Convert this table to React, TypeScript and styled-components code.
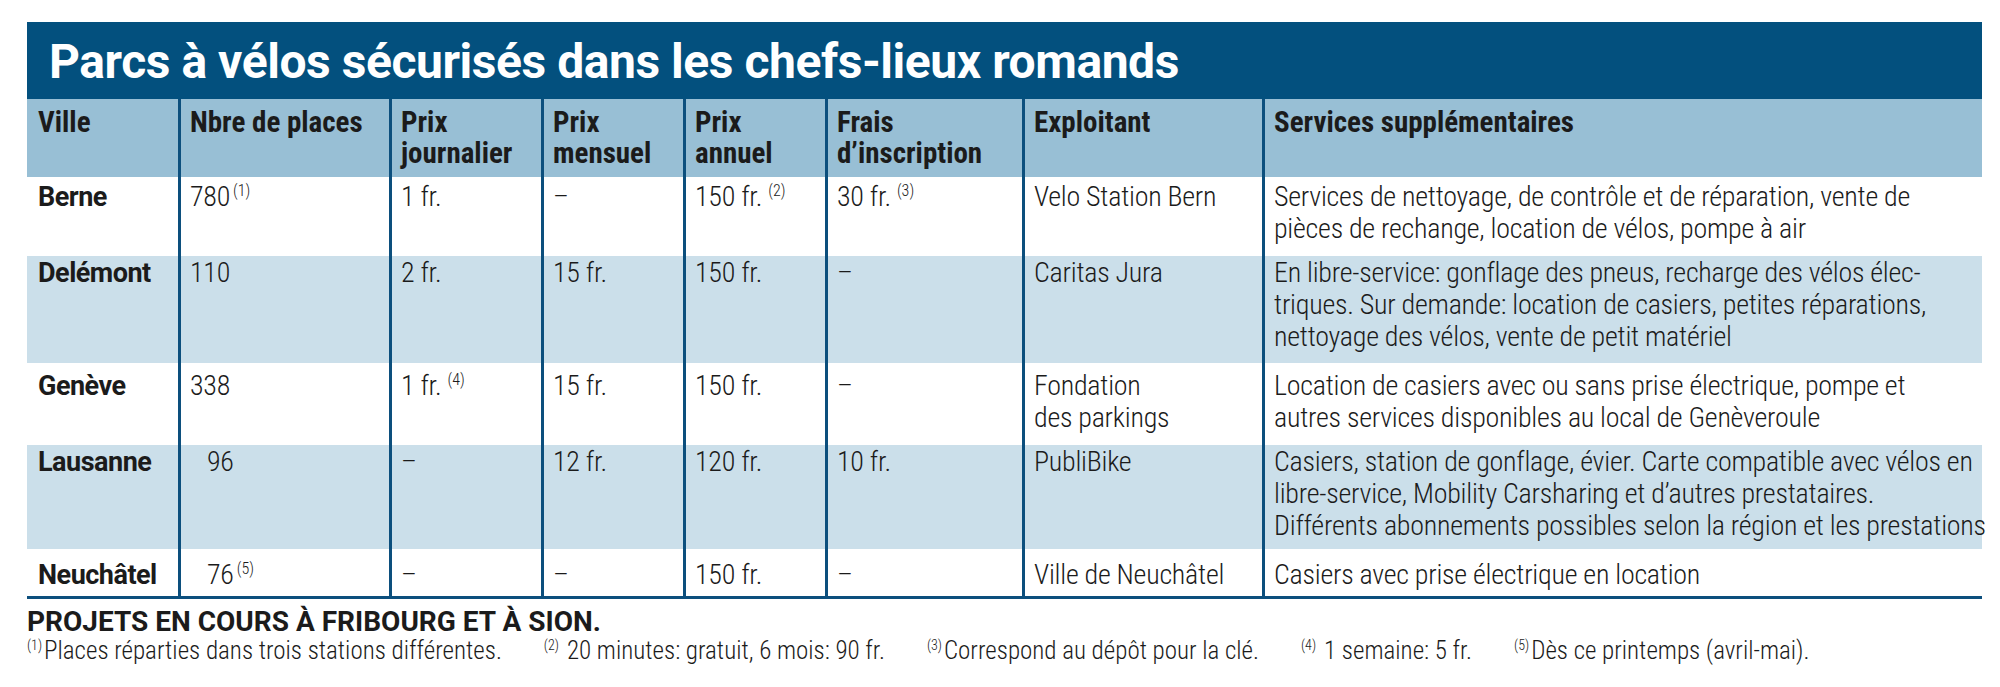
import React from 'react'
import styled, { createGlobalStyle } from 'styled-components'

const GlobalStyle = createGlobalStyle`
  body {
    margin: 0;
    background: #ffffff;
    font-family: Roboto, "Roboto Condensed", "Liberation Sans", sans-serif;
    color: #1b1b1b;
  }
`

const COLS = '151px 211px 152px 142px 142px 197px 240px 720px'

const Page = styled.div`
  padding: 22px 18px 0 27px;
  width: 1955px;
`

const TitleBar = styled.div`
  height: 77px;
  box-sizing: border-box;
  background: #03507e;
  padding: 15px 0 0 22px;
`

const Title = styled.h1`
  margin: 0;
  color: #ffffff;
  font-size: 48px;
  line-height: 49px;
  font-weight: 700;
  font-stretch: 90%;
  letter-spacing: -0.45px;
  white-space: nowrap;
`

const Table = styled.div`
  border-bottom: 3px solid #0c4f7d;
`

const Row = styled.div<{ $bg: string; $h: number; $pt: number }>`
  display: grid;
  grid-template-columns: ${COLS};
  height: ${(p) => p.$h}px;
  background: ${(p) => p.$bg};

  & > div {
    padding-top: ${(p) => p.$pt}px;
  }
`

const Cell = styled.div<{ $first?: boolean }>`
  box-sizing: border-box;
  padding-left: ${(p) => (p.$first ? 11 : 9)}px;
  border-left: ${(p) => (p.$first ? 'none' : '3px solid #0c4f7d')};
  white-space: nowrap;
`

const HeadCell = styled(Cell)`
  font-size: 29px;
  line-height: 31px;
  font-weight: 700;
  font-stretch: 75%;
`

const BodyCell = styled(Cell)`
  font-size: 28px;
  line-height: 32px;
  font-weight: 300;
  font-stretch: 75%;
  letter-spacing: -0.25px;
`

const CityCell = styled(BodyCell)`
  font-size: 27px;
  font-weight: 700;
  font-stretch: 90%;
  letter-spacing: -0.5px;
`

const Indent = styled.span`
  padding-left: 17px;
`

const Sup = styled.sup<{ $gap?: number }>`
  font-size: 16px;
  line-height: 0;
  vertical-align: 10px;
  margin-left: ${(p) => p.$gap ?? 3}px;
  font-weight: 300;
  letter-spacing: 0;
`

const Footer = styled.div`
  padding-top: 7px;
`

const Projects = styled.div`
  font-size: 28px;
  line-height: 31px;
  font-weight: 700;
  font-stretch: 100%;
  white-space: nowrap;
`

const Notes = styled.div`
  display: flex;
  gap: 42px;
  font-size: 25px;
  line-height: 28px;
  font-weight: 300;
  font-stretch: 75%;
  white-space: nowrap;
`

const Note = styled.span``

const NoteSup = styled.sup<{ $gap?: number }>`
  font-size: 14px;
  line-height: 0;
  vertical-align: 9px;
  margin-right: ${(p) => p.$gap ?? 2}px;
`

type RowData = {
  city: string
  places: React.ReactNode
  day: React.ReactNode
  month: string
  year: React.ReactNode
  fee: React.ReactNode
  operator: React.ReactNode
  services: React.ReactNode
  h: number
  pt: number
}

const rows: RowData[] = [
  {
    city: 'Berne',
    places: <>780<Sup>(1)</Sup></>,
    day: '1 fr.',
    month: '–',
    year: <>150 fr.<Sup $gap={6}>(2)</Sup></>,
    fee: <>30 fr.<Sup $gap={6}>(3)</Sup></>,
    operator: 'Velo Station Bern',
    services: <>Services de nettoyage, de contrôle et de réparation, vente de<br />pièces de rechange, location de vélos, pompe à air</>,
    h: 79,
    pt: 4,
  },
  {
    city: 'Delémont',
    places: '110',
    day: '2 fr.',
    month: '15 fr.',
    year: '150 fr.',
    fee: '–',
    operator: 'Caritas Jura',
    services: <>En libre-service: gonflage des pneus, recharge des vélos élec-<br />triques. Sur demande: location de casiers, petites réparations,<br />nettoyage des vélos, vente de petit matériel</>,
    h: 107,
    pt: 1,
  },
  {
    city: 'Genève',
    places: '338',
    day: <>1 fr.<Sup $gap={6}>(4)</Sup></>,
    month: '15 fr.',
    year: '150 fr.',
    fee: '–',
    operator: <>Fondation<br />des parkings</>,
    services: <>Location de casiers avec ou sans prise électrique, pompe et<br />autres services disponibles au local de Genèveroule</>,
    h: 82,
    pt: 7,
  },
  {
    city: 'Lausanne',
    places: <Indent>96</Indent>,
    day: '–',
    month: '12 fr.',
    year: '120 fr.',
    fee: '10 fr.',
    operator: 'PubliBike',
    services: <>Casiers, station de gonflage, évier. Carte compatible avec vélos en<br />libre-service, Mobility Carsharing et d’autres prestataires.<br />Différents abonnements possibles selon la région et les prestations</>,
    h: 104,
    pt: 1,
  },
  {
    city: 'Neuchâtel',
    places: <Indent>76<Sup>(5)</Sup></Indent>,
    day: '–',
    month: '–',
    year: '150 fr.',
    fee: '–',
    operator: 'Ville de Neuchâtel',
    services: 'Casiers avec prise électrique en location',
    h: 47,
    pt: 10,
  },
]

const headers: React.ReactNode[] = [
  'Ville',
  'Nbre de places',
  <>Prix<br />journalier</>,
  <>Prix<br />mensuel</>,
  <>Prix<br />annuel</>,
  <>Frais<br />d’inscription</>,
  'Exploitant',
  'Services supplémentaires',
]

export default function App() {
  return (
    <Page>
      <GlobalStyle />
      <TitleBar>
        <Title>Parcs à vélos sécurisés dans les chefs-lieux romands</Title>
      </TitleBar>
      <Table>
        <Row $bg="#98bfd5" $h={78} $pt={8}>
          {headers.map((h, i) => (
            <HeadCell key={i} $first={i === 0}>{h}</HeadCell>
          ))}
        </Row>
        {rows.map((r, i) => (
          <Row key={r.city} $bg={i % 2 === 0 ? '#ffffff' : '#cbdfea'} $h={r.h} $pt={r.pt}>
            <CityCell $first>{r.city}</CityCell>
            <BodyCell>{r.places}</BodyCell>
            <BodyCell>{r.day}</BodyCell>
            <BodyCell>{r.month}</BodyCell>
            <BodyCell>{r.year}</BodyCell>
            <BodyCell>{r.fee}</BodyCell>
            <BodyCell>{r.operator}</BodyCell>
            <BodyCell>{r.services}</BodyCell>
          </Row>
        ))}
      </Table>
      <Footer>
        <Projects>PROJETS EN COURS À FRIBOURG ET À SION.</Projects>
        <Notes>
          <Note><NoteSup>(1)</NoteSup>Places réparties dans trois stations différentes.</Note>
          <Note><NoteSup $gap={8}>(2)</NoteSup>20 minutes: gratuit, 6 mois: 90 fr.</Note>
          <Note><NoteSup>(3)</NoteSup>Correspond au dépôt pour la clé.</Note>
          <Note><NoteSup $gap={8}>(4)</NoteSup>1 semaine: 5 fr.</Note>
          <Note><NoteSup>(5)</NoteSup>Dès ce printemps (avril-mai).</Note>
        </Notes>
      </Footer>
    </Page>
  )
}
